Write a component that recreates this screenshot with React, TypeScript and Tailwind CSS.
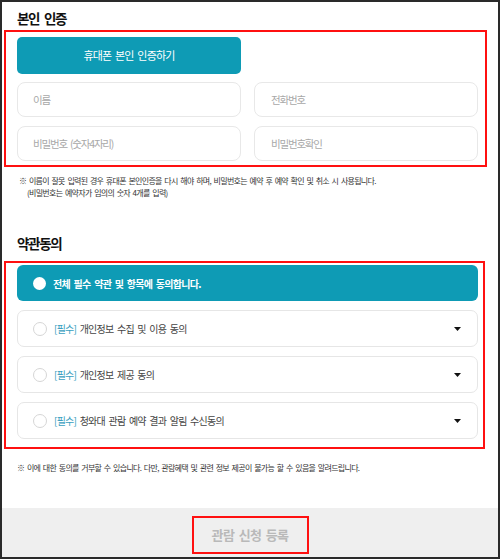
import React from "react";

const font = { fontFamily: '"Noto Sans CJK KR", "Noto Sans", sans-serif' };

function Caret() {
  return (
    <svg width="7" height="4" viewBox="0 0 7 4" className="block">
      <path d="M0 0 L7 0 L3.5 4 Z" fill="#111" />
    </svg>
  );
}

function Item({ label }: { label: string }) {
  return (
    <div className="mt-[9px] w-[461px] h-[37px] rounded-[7px] border border-[#e6e6e6] bg-white flex items-center pl-[15px] pr-[16px]">
      <span className="w-[14px] h-[14px] rounded-full border border-[#d6d6d6] bg-white shrink-0" />
      <span className="ml-[7px] text-[10px] tracking-[-0.75px] [word-spacing:2px] text-[#444] flex-1">
        <span className="text-[#3aa0c0]">[필수]</span> {label}
      </span>
      <Caret />
    </div>
  );
}

function Field({ text, pl }: { text: string; pl: string }) {
  return (
    <div
      className={`w-[224px] h-[35px] rounded-[8px] border border-[#e8e8e8] flex items-center ${pl} text-[10.5px] tracking-[-1.2px] [word-spacing:2px] text-[#a8a8a8]`}
    >
      {text}
    </div>
  );
}

export default function App() {
  return (
    <div
      style={font}
      className="w-[500px] h-[559px] border-2 border-[#2a2a2a] bg-white flex flex-col overflow-hidden"
    >
      <div className="h-[28px] pt-[4px] pl-[15px] leading-[24px] text-[13.5px] font-bold tracking-[-1.3px] [word-spacing:3px] text-[#111]">
        본인 인증
      </div>
      <div className="ml-[2px] w-[483px] h-[137px] border-2 border-[#ff1010] pl-[11px] pt-[5px]">
        <div className="w-[224px] h-[37px] rounded-[5px] bg-[#0e9bb5] flex items-center justify-center text-white text-[11px] tracking-[-0.8px] [word-spacing:2px]">
          휴대폰 본인 인증하기
        </div>
        <div className="mt-[8px] flex gap-[13px]">
          <Field text="이름" pl="pl-[15px]" />
          <Field text="전화번호" pl="pl-[16px]" />
        </div>
        <div className="mt-[9px] flex gap-[13px]">
          <Field text="비밀번호 (숫자4자리)" pl="pl-[15px]" />
          <Field text="비밀번호확인" pl="pl-[16px]" />
        </div>
      </div>
      <div className="mt-[8px] text-[8px] leading-[12px] tracking-[-0.7px] [word-spacing:1.5px] text-[#333]">
        <div className="pl-[17px]">※ 이름이 잘못 입력된 경우 휴대폰 본인인증을 다시 해야 하며, 비밀번호는 예약 후 예약 확인 및 취소 시 사용됩니다.</div>
        <div className="pl-[25px]">(비밀번호는 예약자가 임의의 숫자 4개를 입력)</div>
      </div>
      <div className="mt-[32px] mb-[6px] h-[24px] leading-[24px] pl-[15px] text-[13.5px] font-bold tracking-[-1.3px] text-[#111]">
        약관동의
      </div>
      <div className="ml-[2px] w-[481px] h-[188px] border-2 border-[#ff1010] pl-[11px] pt-[2px]">
        <div className="w-[461px] h-[36px] rounded-[6px] bg-[#0e9bb5] flex items-center pl-[16px]">
          <span className="w-[13px] h-[13px] rounded-full bg-white shrink-0" />
          <span className="ml-[7px] text-[10px] font-bold tracking-[-0.7px] [word-spacing:2px] text-white">
            전체 필수 약관 및 항목에 동의합니다.
          </span>
        </div>
        <Item label="개인정보 수집 및 이용 동의" />
        <Item label="개인정보 제공 동의" />
        <Item label="청와대 관람 예약 결과 알림 수신동의" />
      </div>
      <div className="mt-[13px] pl-[15px] text-[8px] leading-[12px] tracking-[-0.7px] [word-spacing:1.5px] text-[#333]">
        ※ 이에 대한 동의를 거부할 수 있습니다. 다만, 관람혜택 및 관련 정보 제공이 불가능 할 수 있음을 알려드립니다.
      </div>
      <div className="flex-1" />
      <div className="h-[49px] bg-[#efefef] flex justify-center pt-[8px]">
        <div className="w-[117px] h-[38px] border-2 border-[#ff1010] flex items-center justify-center text-[13px] font-bold tracking-[-0.6px] [word-spacing:2px] text-[#b9b9b9]">
          관람 신청 등록
        </div>
      </div>
    </div>
  );
}
